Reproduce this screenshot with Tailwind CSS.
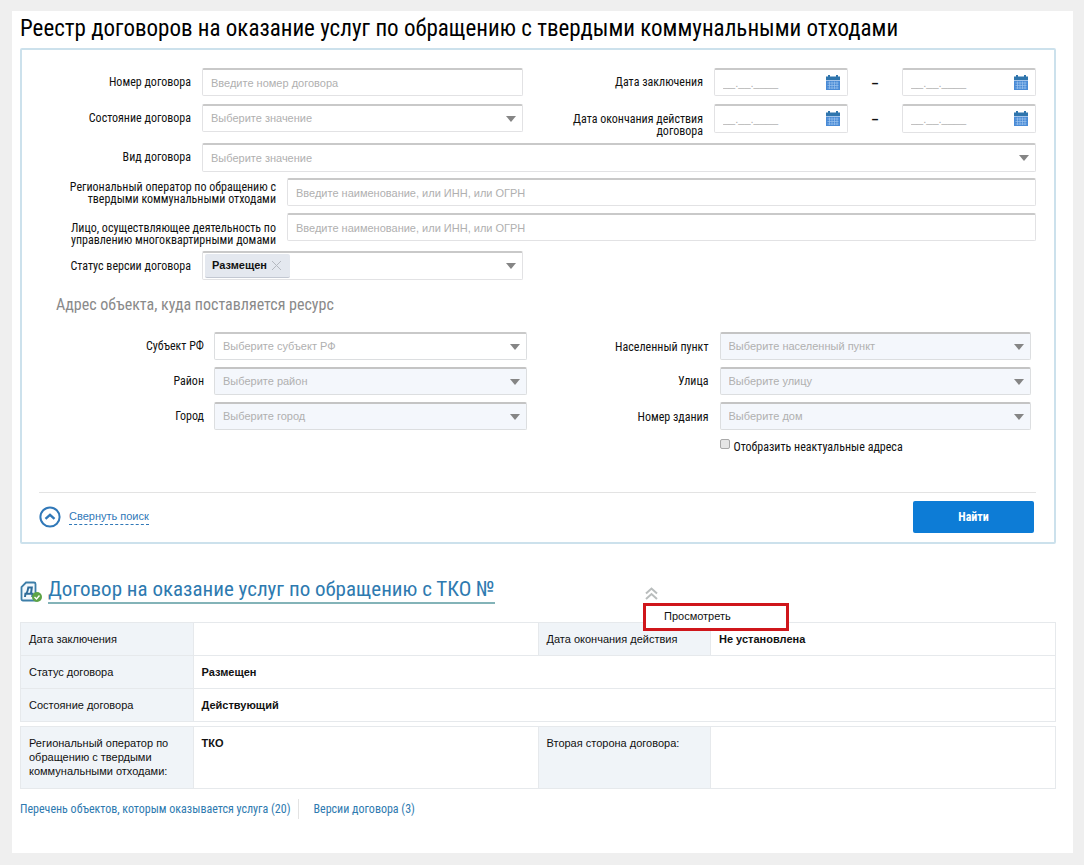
<!DOCTYPE html>
<html lang="ru">
<head>
<meta charset="utf-8">
<meta name="viewport" content="width=device-width, initial-scale=1">
<title>Реестр договоров</title>
<script src="https://cdn.jsdelivr.net/npm/@tailwindcss/browser@4"></script>
</head>
<body class="bg-[#efefef] pt-[11px] pr-[11px] pb-3 pl-3 font-['Roboto_Condensed','Liberation_Sans_Narrow','Roboto',sans-serif] text-xs text-[#111]">
<svg class="hidden" aria-hidden="true">
  <symbol id="arrow" viewBox="0 0 10 6"><path d="M0 0h10L5 6z" fill="#858585"/></symbol>
  <symbol id="calendar" viewBox="0 0 14 15">
    <path d="M0 1.500h2V0h2v1.500h6V0h2v1.500h2V5H0z" fill="#2f75ad"/>
    <path d="M0 5.500h14V15H0z" fill="#4a8bd6"/>
    <path d="M1.500 8h11M1.500 10.500h11M1.500 13h11M3.500 6.500v7.500M6 6.500v7.500M8.500 6.500v7.500M11 6.500v7.500" stroke="#9cc3ee" stroke-width=".7" fill="none"/>
  </symbol>
</svg>
<main class="bg-white pt-px pr-[17px] pb-[34px] pl-2">
  <h1 class="pb-0.5 text-[23px] leading-[34px] text-black">Реестр договоров на оказание услуг по обращению с твердыми коммунальными отходами</h1>

  <form class="rounded-xs border-2 border-[#cce1ec] pt-[18px] pb-0.5">
    <div class="flex flex-col pr-[18px]">
      <div class="flex gap-[11px]">
        <label for="num" class="w-[169px] shrink-0 text-right leading-7">Номер договора</label>
        <input id="num" type="text" placeholder="Введите номер договора" class="h-7 min-w-0 flex-1 rounded-xs border border-t-2 border-[#e2e2e4] border-t-[#c9c9c9] px-2 font-['Liberation_Sans',sans-serif] text-[11px] placeholder:text-[#b0b0b0]">
        <label for="d1" class="w-[169px] shrink-0 text-right leading-7">Дата заключения</label>
        <div class="flex shrink-0">
          <div class="relative w-[134px]">
            <input id="d1" type="text" placeholder="__.__.____" class="h-7 w-full rounded-xs border border-t-2 border-[#e2e2e4] border-t-[#c9c9c9] px-2 font-['Liberation_Sans',sans-serif] text-[11px] placeholder:text-[#b0b0b0]">
            <button type="button" aria-label="Календарь" class="absolute top-[7px] right-2"><svg class="h-[15px] w-3.5"><use href="#calendar"/></svg></button>
          </div>
          <span class="w-[54px] text-center text-sm leading-8 font-medium">–</span>
          <div class="relative w-[134px]">
            <input type="text" aria-label="Дата заключения по" placeholder="__.__.____" class="h-7 w-full rounded-xs border border-t-2 border-[#e2e2e4] border-t-[#c9c9c9] px-2 font-['Liberation_Sans',sans-serif] text-[11px] placeholder:text-[#b0b0b0]">
            <button type="button" aria-label="Календарь" class="absolute top-[7px] right-2"><svg class="h-[15px] w-3.5"><use href="#calendar"/></svg></button>
          </div>
        </div>
      </div>

      <div class="mt-1 flex gap-[11px]">
        <label for="state" class="w-[169px] shrink-0 text-right leading-7">Состояние договора</label>
        <div class="relative h-7 min-w-0 flex-1">
          <select id="state" class="h-7 w-full appearance-none rounded-xs border border-t-2 border-[#e2e2e4] border-t-[#c9c9c9] px-2 font-['Liberation_Sans',sans-serif] text-[11px] text-[#b0b0b0]"><option>Выберите значение</option></select>
          <svg class="pointer-events-none absolute top-3 right-[7px] h-1.5 w-2.5"><use href="#arrow"/></svg>
        </div>
        <label for="d2" class="w-[169px] shrink-0 pt-[9px] text-right leading-3">Дата окончания действия договора</label>
        <div class="flex shrink-0">
          <div class="relative w-[134px]">
            <input id="d2" type="text" placeholder="__.__.____" class="h-[29px] w-full rounded-xs border border-t-2 border-[#e2e2e4] border-t-[#c9c9c9] px-2 font-['Liberation_Sans',sans-serif] text-[11px] placeholder:text-[#b0b0b0]">
            <button type="button" aria-label="Календарь" class="absolute top-[7px] right-2"><svg class="h-[15px] w-3.5"><use href="#calendar"/></svg></button>
          </div>
          <span class="w-[54px] text-center text-sm leading-8 font-medium">–</span>
          <div class="relative w-[134px]">
            <input type="text" aria-label="Дата окончания по" placeholder="__.__.____" class="h-[29px] w-full rounded-xs border border-t-2 border-[#e2e2e4] border-t-[#c9c9c9] px-2 font-['Liberation_Sans',sans-serif] text-[11px] placeholder:text-[#b0b0b0]">
            <button type="button" aria-label="Календарь" class="absolute top-[7px] right-2"><svg class="h-[15px] w-3.5"><use href="#calendar"/></svg></button>
          </div>
        </div>
      </div>

      <div class="mt-[6px] flex gap-[11px]">
        <label for="kind" class="w-[169px] shrink-0 text-right leading-7">Вид договора</label>
        <div class="relative min-w-0 flex-1">
          <select id="kind" class="h-[29px] w-full appearance-none rounded-xs border border-t-2 border-[#e2e2e4] border-t-[#c9c9c9] px-2 font-['Liberation_Sans',sans-serif] text-[11px] text-[#b0b0b0]"><option>Выберите значение</option></select>
          <svg class="pointer-events-none absolute top-3 right-[7px] h-1.5 w-2.5"><use href="#arrow"/></svg>
        </div>
      </div>

      <div class="mt-[6px] flex gap-[11px]">
        <label for="oper" class="w-[254px] shrink-0 pt-[3px] text-right leading-3">Региональный оператор по обращению с<br>твердыми коммунальными отходами</label>
        <input id="oper" type="text" placeholder="Введите наименование, или ИНН, или ОГРН" class="h-7 min-w-0 flex-1 rounded-xs border border-t-2 border-[#e2e2e4] border-t-[#c9c9c9] px-2 font-['Liberation_Sans',sans-serif] text-[11px] placeholder:text-[#b0b0b0]">
      </div>
      <div class="mt-[7px] flex gap-[11px]">
        <label for="person" class="w-[254px] shrink-0 pt-[9px] text-right leading-3">Лицо, осуществляющее деятельность по<br>управлению многоквартирными домами</label>
        <input id="person" type="text" placeholder="Введите наименование, или ИНН, или ОГРН" class="h-7 min-w-0 flex-1 rounded-xs border border-t-2 border-[#e2e2e4] border-t-[#c9c9c9] px-2 font-['Liberation_Sans',sans-serif] text-[11px] placeholder:text-[#b0b0b0]">
      </div>

      <div class="mt-[5px] flex gap-[11px]">
        <span id="status-label" class="w-[169px] shrink-0 text-right leading-[30px]">Статус версии договора</span>
        <div role="group" aria-labelledby="status-label" class="flex h-[29px] flex-1 items-center rounded-xs border border-t-2 border-[#e2e2e4] border-t-[#c9c9c9] pr-1.5 pl-0.5">
          <span class="flex h-6 items-center gap-1 rounded-xs border-b border-[#c3c8d2] bg-[#e4e8ef] pr-2 pl-[7px] font-['Liberation_Sans',sans-serif] text-[11px] font-bold">Размещен
            <button type="button" aria-label="Убрать"><svg class="h-[11px] w-[11px]" viewBox="0 0 11 11"><path d="M1 1l9 9M10 1l-9 9" stroke="#b5b9c0"/></svg></button></span>
          <button type="button" aria-label="Открыть список" class="ml-auto"><svg class="h-1.5 w-2.5"><use href="#arrow"/></svg></button>
        </div>
        <div class="w-[502px] shrink-0"></div>
      </div>
    </div>

    <h2 class="mt-3 pl-[34px] text-base leading-6 text-[#8a8a8a]">Адрес объекта, куда поставляется ресурс</h2>

    <div class="mt-[15px] flex pr-[23px]">
      <div class="flex flex-1 flex-col gap-[7px]">
        <div class="flex gap-2.5">
          <label for="subj" class="w-[182px] shrink-0 text-right leading-7">Субъект РФ</label>
          <div class="relative flex-1">
            <select id="subj" class="block h-7 w-full appearance-none rounded-xs border border-t-2 border-[#dcdee0] border-t-[#c9c9c9] px-2 font-['Liberation_Sans',sans-serif] text-[11px] text-[#b0b0b0]"><option>Выберите субъект РФ</option></select>
            <svg class="pointer-events-none absolute top-3 right-[7px] h-1.5 w-2.5"><use href="#arrow"/></svg>
          </div>
        </div>
        <div class="flex gap-2.5">
          <label for="dist" class="w-[182px] shrink-0 text-right leading-7">Район</label>
          <div class="relative flex-1">
            <select id="dist" disabled class="block h-7 w-full appearance-none rounded-xs border border-t-2 border-[#dcdee0] border-t-[#c4c4c4] bg-[#f4f7fc] px-2 font-['Liberation_Sans',sans-serif] text-[11px] text-[#b0b0b0] opacity-100"><option>Выберите район</option></select>
            <svg class="pointer-events-none absolute top-3 right-[7px] h-1.5 w-2.5"><use href="#arrow"/></svg>
          </div>
        </div>
        <div class="flex gap-2.5">
          <label for="city" class="w-[182px] shrink-0 text-right leading-7">Город</label>
          <div class="relative flex-1">
            <select id="city" disabled class="block h-7 w-full appearance-none rounded-xs border border-t-2 border-[#dcdee0] border-t-[#c4c4c4] bg-[#f4f7fc] px-2 font-['Liberation_Sans',sans-serif] text-[11px] text-[#b0b0b0] opacity-100"><option>Выберите город</option></select>
            <svg class="pointer-events-none absolute top-3 right-[7px] h-1.5 w-2.5"><use href="#arrow"/></svg>
          </div>
        </div>
      </div>
      <div class="flex flex-1 flex-col gap-[7px]">
        <div class="flex gap-[11px]">
          <label for="town" class="h-7 w-[182px] shrink-0 text-right leading-[30px]">Населенный пункт</label>
          <div class="relative flex-1">
            <select id="town" disabled class="block h-7 w-full appearance-none rounded-xs border border-t-2 border-[#dcdee0] border-t-[#c4c4c4] bg-[#f4f7fc] px-2 font-['Liberation_Sans',sans-serif] text-[11px] text-[#b0b0b0] opacity-100"><option>Выберите населенный пункт</option></select>
            <svg class="pointer-events-none absolute top-3 right-[7px] h-1.5 w-2.5"><use href="#arrow"/></svg>
          </div>
        </div>
        <div class="flex gap-[11px]">
          <label for="street" class="w-[182px] shrink-0 text-right leading-7">Улица</label>
          <div class="relative flex-1">
            <select id="street" disabled class="block h-7 w-full appearance-none rounded-xs border border-t-2 border-[#dcdee0] border-t-[#c4c4c4] bg-[#f4f7fc] px-2 font-['Liberation_Sans',sans-serif] text-[11px] text-[#b0b0b0] opacity-100"><option>Выберите улицу</option></select>
            <svg class="pointer-events-none absolute top-3 right-[7px] h-1.5 w-2.5"><use href="#arrow"/></svg>
          </div>
        </div>
        <div class="flex gap-[11px]">
          <label for="house" class="h-7 w-[182px] shrink-0 text-right leading-[30px]">Номер здания</label>
          <div class="relative flex-1">
            <select id="house" disabled class="block h-7 w-full appearance-none rounded-xs border border-t-2 border-[#dcdee0] border-t-[#c4c4c4] bg-[#f4f7fc] px-2 font-['Liberation_Sans',sans-serif] text-[11px] text-[#b0b0b0] opacity-100"><option>Выберите дом</option></select>
            <svg class="pointer-events-none absolute top-3 right-[7px] h-1.5 w-2.5"><use href="#arrow"/></svg>
          </div>
        </div>
        <div class="flex items-start gap-1 pt-0.5 pl-[193px]">
          <input id="old" type="checkbox" class="h-2.5 w-2.5 appearance-none rounded-xs border border-[#a9a9a9] bg-[#e6e6e6]">
          <label for="old" class="leading-4 whitespace-nowrap">Отобразить неактуальные адреса</label>
        </div>
      </div>
    </div>

    <div class="mt-[37px] mr-[18px] ml-[17px] flex h-12 items-center justify-between border-t border-[#e3e3e3] pr-0.5">
      <div class="flex items-center gap-2">
        <svg class="h-[22px] w-[22px]" viewBox="0 0 22 22" fill="none" stroke="#3078b8"><circle cx="11" cy="11" r="9.600" stroke-width="2"/><path d="M6.500 12.800L11 8.800l4.500 4" stroke-width="2.400"/></svg>
        <button type="button" class="border-b border-dashed border-[#3078b8] font-['Liberation_Sans',sans-serif] text-[11px] leading-4 text-[#3078b8]">Свернуть поиск</button>
      </div>
      <button type="submit" class="h-8 w-[121px] rounded-xs bg-[#0d7cd6] font-bold text-white">Найти</button>
    </div>
  </form>

  <section>
    <div class="relative mt-[33px] flex h-[45px] items-start gap-1.5">
      <svg class="mt-1 h-[22px] w-[22px]" viewBox="0 0 22 22" fill="none">
        <path d="M6 1.500h8q1.500 0 1.500 1.500v16.500H3q-1.500 0-1.500-1.500V6z" stroke="#3d7ea8" stroke-width="1.800" fill="#f2f8fc"/>
        <path d="M5 16l.4-3.200h7.200L12.200 16M6.300 12.500Q7.800 10.500 8.300 6.500h3.500l-.8 6" stroke="#2f6c99" stroke-width="2"/>
        <circle cx="17" cy="16" r="5" fill="#5da345"/><path d="M14.500 16l2 2 3-3.500" stroke="#fff" stroke-width="1.400"/>
      </svg>
      <h2 class="text-[21px] leading-[25px]"><a href="#" class="block border-b-2 border-[#83b3b8] text-[#2e7ab0]">Договор на оказание услуг по обращению с ТКО №</a></h2>
      <button type="button" aria-label="Свернуть" class="absolute top-2.5 left-[625px]"><svg class="h-[13px] w-[13px]" viewBox="0 0 13 13" fill="none" stroke="#b9bdbd" stroke-width="2"><path d="M1 6.500l5.500-5 5.500 5M1 12l5.500-5 5.500 5"/></svg></button>
      <button type="button" class="absolute top-[26px] left-[623px] h-7 w-[146px] border-[3px] border-[#cf161b] bg-white pb-0.5 pl-[18px] text-left font-['Liberation_Sans',sans-serif] text-[11px]">Просмотреть</button>
    </div>

    <table class="w-full table-fixed border-collapse text-left font-['Liberation_Sans',sans-serif] text-[11px] leading-[15px]">
      <colgroup><col class="w-1/6"><col class="w-1/3"><col class="w-1/6"><col class="w-1/3"></colgroup>
      <tbody>
        <tr class="h-[33px]"><th class="border border-[#e6e9ec] bg-[#f0f4f8] px-2 font-normal">Дата заключения</th><td class="border border-[#e6e9ec]"></td><th class="border border-[#e6e9ec] bg-[#f0f4f8] px-2 font-normal">Дата окончания действия</th><td class="border border-[#e6e9ec] px-2 font-bold">Не установлена</td></tr>
        <tr class="h-[33px]"><th class="border border-[#e6e9ec] bg-[#f0f4f8] px-2 font-normal">Статус договора</th><td colspan="3" class="border border-[#e6e9ec] px-2 font-bold">Размещен</td></tr>
        <tr class="h-[33px]"><th class="border border-[#e6e9ec] bg-[#f0f4f8] px-2 font-normal">Состояние договора</th><td colspan="3" class="border border-[#e6e9ec] px-2 font-bold">Действующий</td></tr>
      </tbody>
    </table>
    <table class="mt-1 w-full table-fixed border-collapse text-left font-['Liberation_Sans',sans-serif] text-[11px] leading-[14px]">
      <colgroup><col class="w-1/6"><col class="w-1/3"><col class="w-1/6"><col class="w-1/3"></colgroup>
      <tbody>
        <tr class="h-[62px] align-top"><th class="border border-[#e6e9ec] bg-[#f0f4f8] px-2 pt-[9px] font-normal">Региональный оператор по обращению с твердыми коммунальными отходами:</th><td class="border border-[#e6e9ec] px-2 pt-[9px] font-bold">ТКО</td><th class="border border-[#e6e9ec] bg-[#f0f4f8] px-2 pt-[9px] font-normal">Вторая сторона договора:</th><td class="border border-[#e6e9ec]"></td></tr>
      </tbody>
    </table>
    <nav class="mt-2.5 flex leading-5 text-[#2e7ab0]">
      <a href="#" class="border-r border-[#e3e3e3] pr-2">Перечень объектов, которым оказывается услуга (20)</a>
      <a href="#" class="pl-3.5">Версии договора (3)</a>
    </nav>
  </section>
</main>
</body>
</html>
